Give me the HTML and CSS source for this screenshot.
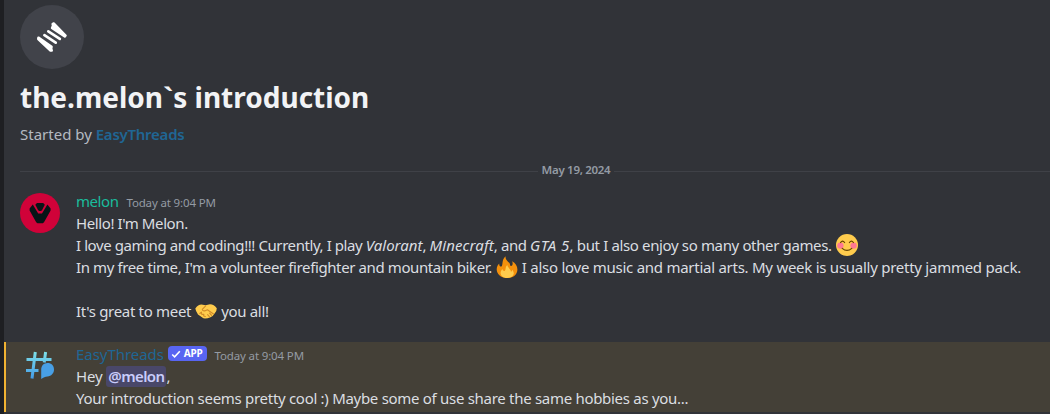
FILE: index.html
```
<!DOCTYPE html>
<html lang="en">
<head>
<meta charset="utf-8">
<title>the.melon`s introduction</title>
<link rel="stylesheet" href="styles.css">
</head>
<body>
<main class="thread">
  <header class="intro">
    <div class="thread-icon">
      <svg width="64" height="64" viewBox="0 0 64 64" fill="none" stroke="#fff" stroke-linecap="round" stroke-linejoin="round">
        <path d="M33.7 18.4L45.6 30.6L44.8 31.6L32 23L33 20.8L32.6 19Z" fill="#fff" stroke-width="2.4"/>
        <path d="M18.4 32.6L31.6 41.8L31.2 43.8L31.8 45.5L30.5 45.5L18.2 34Z" fill="#fff" stroke-width="2.4"/>
        <path d="M28.3 26.3L39.8 33.9M24.4 30.2L35.7 37.7" stroke-width="2.7"/>
      </svg>
    </div>
    <h1 class="title">the.melon`s introduction</h1>
    <p class="started"><span class="started-by">Started by</span> <a class="owner">EasyThreads</a></p>
  </header>

  <div class="divider"><span class="date">May 19, 2024</span></div>

  <article class="message">
    <svg class="avatar" width="40" height="40" viewBox="0 0 40 40">
      <circle cx="20" cy="20" r="20" fill="#d00239"/>
      <g fill="#081417">
        <path d="M17 10h6.2l1.6 1.8-2.8 5.4-1 .8h-1.8l-1-.8-2.9-5.4z"/>
        <path d="M12.8 11.6L18.2 20.6H22L27.4 11.6L30.6 15.4V17.5L24 29.2L22.8 30.2H17.4L16.2 29.2L9.6 17.5V15.4Z"/>
      </g>
    </svg>
    <div class="body">
      <div class="head"><span class="name name-melon">melon</span><time class="time">Today at 9:04 PM</time></div>
      <div class="line l1">Hello! I'm Melon.</div>
      <div class="line"><span class="l2">I love gaming and coding!!! Currently, I play <em>Valorant</em>, <em class="minecraft">Minecraft</em>, and <em class="gta">GTA 5</em><span class="tail">, but I also enjoy so many other games.</span></span><svg class="emoji" width="22" height="22" viewBox="0 0 22 22">
          <circle cx="11" cy="11" r="11" fill="#ffcc4d"/>
          <circle cx="4.4" cy="11.6" r="3.2" fill="#ff7892"/><circle cx="17.6" cy="11.6" r="3.2" fill="#ff7892"/>
          <path d="M4.6 8.5Q6.5 5.6 8.6 8.5M13.4 8.5Q15.5 5.6 17.4 8.5M6.2 14.4Q11 18.5 15.8 14.4" fill="none" stroke="#664500" stroke-width="1.2" stroke-linecap="round"/>
        </svg></div>
      <div class="line"><span class="l3a">In my free time, I'm a volunteer firefighter and mountain biker.</span><svg class="emoji" width="22" height="22" viewBox="0 0 22 22">
          <path d="M11 22C4.5 22 .7 17.8.7 13.2C.7 10.5 2 8.5 3.3 7.4C3 9.5 4 10.7 5.2 10.6C7.3 10.2 5.2 3.8 9.6.2C9.2 3.8 11.9 5.1 13.6 7.2C14.2 8.4 14 9.5 14.7 10C16.5 10.5 17.3 7.6 16.1 5.2C19.4 6.8 21.4 10.1 21.4 13.4C21.4 18.5 17.2 22 11 22Z" fill="#f4900c"/>
          <path d="M11.2 22C7 22 4.4 19.7 4.6 16.7C4.8 14.5 6 13.8 6.4 13.1C7 15 8 15.3 8.8 14.8C10.2 13.8 8.9 10.9 11.4 9C11.3 11.8 15 12.9 14.9 15.7C16 15.5 16.2 14.6 16.1 13.7C17.4 15 18 16.6 17.7 18C17 20.6 14.5 22 11.2 22Z" fill="#ffcc4d"/>
        </svg><span class="l3b">I also love music and martial arts. My week is usually pretty jammed pack.</span></div>
      <div class="line"></div>
      <div class="line"><span class="l5">It's great to meet</span><svg class="emoji" width="22" height="22" viewBox="0 0 22 22">
          <path d="M.3 8.6Q3 4.6 6.5 4.6L10.5 5.3L15 4.3Q19 4.4 21.8 8.3Q21.8 11.5 19.6 13.6Q18.4 16 15.5 17.2Q11.5 18.9 8.4 18.3L3 14.4Q.8 11.6.3 8.6Z" fill="#ffcc4d"/>
          <path d="M10.7 5.8L7.3 9.3Q7.8 11.8 10.8 10.4L12.4 9.8L18.5 14M14.6 13.1L16.6 15.3M12.6 14.7L14.4 16.7M4.8 13.5L6.4 12.2L6.8 14.5L8.8 14.2L8.7 16L10.3 16.5" fill="none" stroke="#d08b28" stroke-width="1.1" stroke-linecap="round" stroke-linejoin="round"/>
        </svg><span class="l5">you all!</span></div>
    </div>
  </article>

  <article class="message mentioned">
    <svg class="avatar" width="40" height="40" viewBox="0 0 40 40">
      <defs><linearGradient id="hash" gradientUnits="userSpaceOnUse" x1="0" y1="6" x2="0" y2="34"><stop offset="0" stop-color="#7fe1e8"/><stop offset="1" stop-color="#439be8"/></linearGradient></defs>
      <path d="M15.3 7L12 33.5M25.6 7L24.2 17.5M6.5 14.5H31.5M6 25.6H18.5" fill="none" stroke="url(#hash)" stroke-width="3"/>
      <path d="M27.5 18C31.4 18 34 20.7 34 24.4C34 28.3 31.2 31 27.5 31.4C25 31.5 23.6 32.5 21.2 34V24.5C21.2 20.8 23.8 18 27.5 18Z" fill="#489fe5"/>
    </svg>
    <div class="body">
      <div class="head"><span class="name name-app">EasyThreads</span><span class="badge"><svg width="10" height="10" viewBox="0 0 10 10"><path d="M1.2 5.5L3.6 7.8L8.8 2.2" fill="none" stroke="#fff" stroke-width="1.6"/></svg><span>APP</span></span><time class="time">Today at 9:04 PM</time></div>
      <div class="line"><span class="hey">Hey</span><span class="mention">@melon</span>,</div>
      <div class="line l7">Your introduction seems pretty cool :) Maybe some of use share the same hobbies as you...</div>
    </div>
  </article>
</main>
</body>
</html>
```
FILE: styles.css
```
* { box-sizing: border-box; }
body { margin: 0; width: 1050px; height: 414px; overflow: hidden; background: #313338; color: #dbdee1; font: 15px/22px "Noto Sans", sans-serif; }
.thread { height: 414px; border-left: 4px solid #1e1f22; overflow: hidden; }
.intro { padding: 5px 16px 0; height: 148px; }
.thread-icon { width: 64px; height: 64px; border-radius: 50%; background: #41434a; }
.thread-icon svg { display: block; }
.title { margin: 8px 0 0; font-size: 28px; line-height: 40px; font-weight: 700; color: #f2f3f5; white-space: nowrap; }
.started { margin: 6px 0 0; color: #b5bac1; white-space: nowrap; }
.owner { color: #206694; font-weight: 600; letter-spacing: -.25px; }
.divider { display: flex; align-items: center; margin-left: 16px; margin-right: -82px; height: 46px; }
.divider::before, .divider::after { content: ""; height: 1px; background: #3f4147; flex: 1; }
.date { padding: 0 4px 2px; color: #949ba4; font-size: 11.5px; font-weight: 600; letter-spacing: -.3px; }
.message { display: flex; gap: 16px; padding-left: 16px; white-space: nowrap; }
.avatar { flex: none; margin-top: -1px; }
.body { margin-top: -4px; }
.head { display: flex; align-items: center; height: 22px; }
.time { font-size: 11.5px; color: #949ba4; margin-left: 8px; padding-top: 3px; letter-spacing: -.15px; }
.name-melon { color: #1abc9c; letter-spacing: -.45px; }
.name-app { color: #206694; letter-spacing: -.05px; }
.line { display: flex; align-items: center; height: 22px; white-space: pre; }
.l1 { letter-spacing: -.4px; }
.l2 { letter-spacing: -.42px; }
.l2 em { letter-spacing: 0; }
.l2 .minecraft { letter-spacing: .1px; }
.l2 .gta { letter-spacing: .4px; }
.tail { letter-spacing: -.36px; }
.l3a { letter-spacing: -.39px; }
.l3b { letter-spacing: -.26px; }
.l5 { letter-spacing: -.32px; }
.l7 { letter-spacing: -.295px; }
.emoji { flex: none; margin: 0 4px; }
.mentioned { height: 70px; margin-top: 20px; padding: 4px 0 0 14px; background: #444037; border-left: 2px solid #f0b232; }
.mentioned .body { margin-top: -3px; }
.badge { display: flex; align-items: center; gap: 3px; height: 15px; padding: 0 4px 0 3px; margin: -1px 0 0 4px; border-radius: 4px; background: #5865f2; color: #fff; font-size: 10px; font-weight: 700; line-height: 15px; letter-spacing: -.2px; }
.mention { background: #494769; color: #c9cdfb; border-radius: 3px; padding: 0 2px; margin-left: 4px; line-height: 21px; font-weight: 600; letter-spacing: -.6px; }
.hey { letter-spacing: -.2px; }
```
